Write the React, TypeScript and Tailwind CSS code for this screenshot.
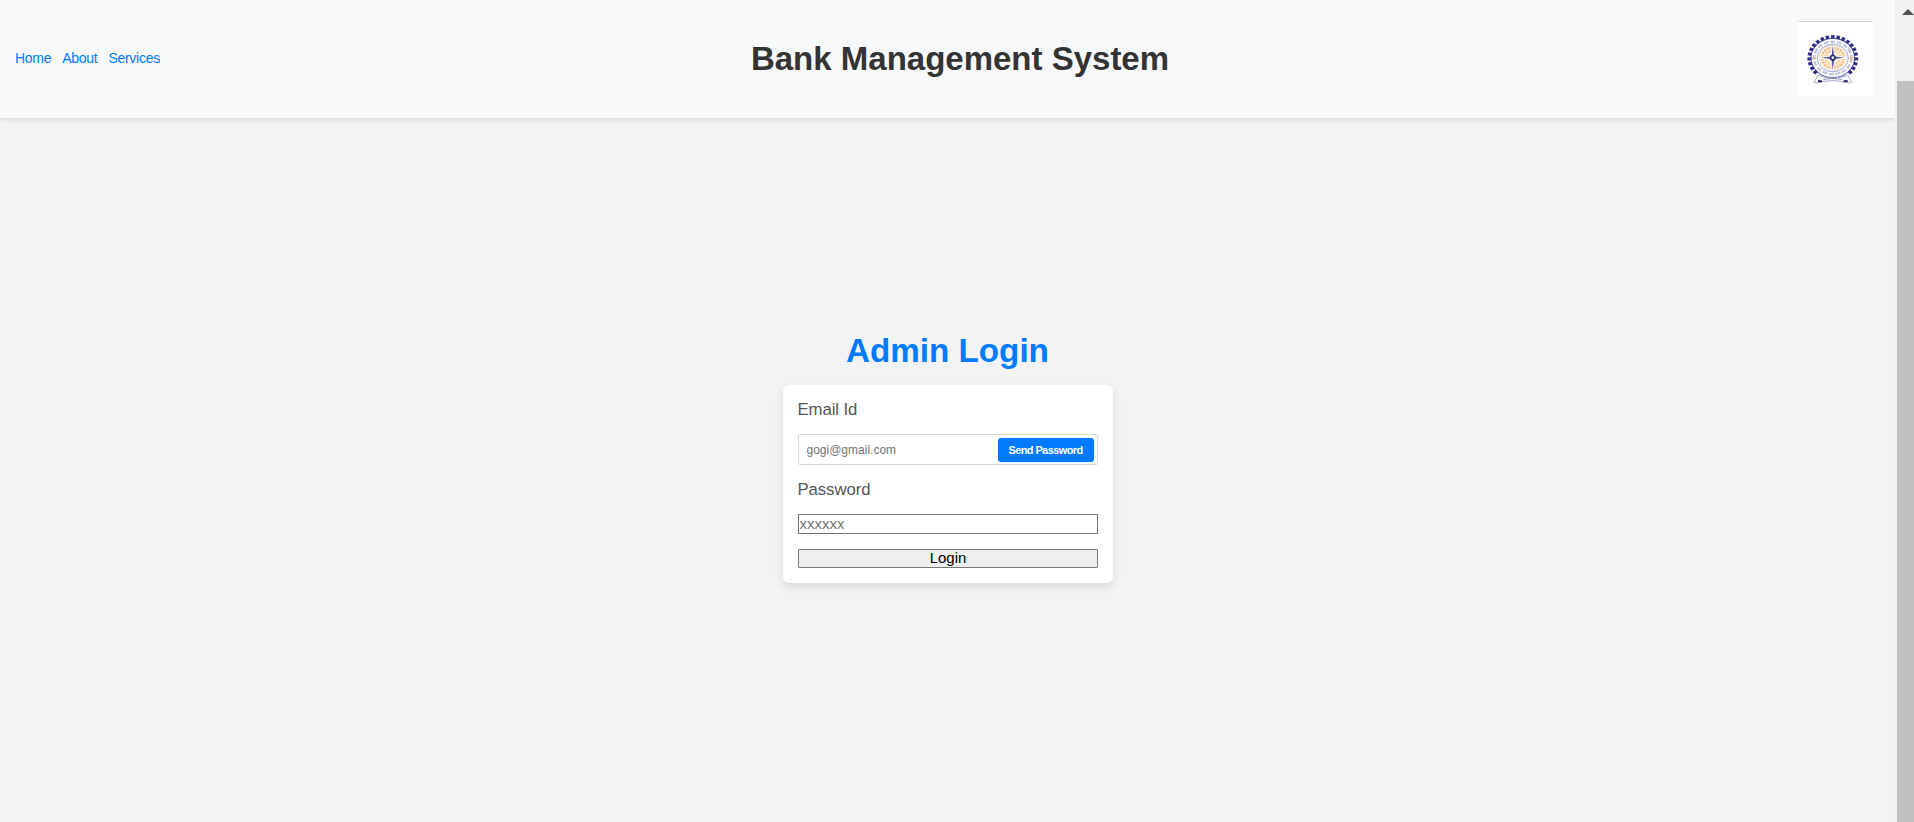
import React from "react";

const toothAngles = Array.from({ length: 21 }, (_, i) => -132 + i * 13.2);

function GearTeeth() {
  return (
    <g fill="#2f2f88">
      {toothAngles.map((angle) => (
        <rect
          key={angle}
          x="-1.75"
          y="-25.4"
          width="3.5"
          height="3.8"
          transform={`translate(34.8 37) scale(1 .9) rotate(${angle})`}
        />
      ))}
    </g>
  );
}

function Emblem() {
  return (
    <svg viewBox="0 0 75 75" className="block h-[75px] w-[75px]" aria-hidden="true">
      <rect width="75" height="75" fill="#fff" />
      <rect width="75" height="1" fill="#d6d6d8" />
      <g fill="none">
        <ellipse cx="34.8" cy="37" rx="21.8" ry="19.6" stroke="#6668a8" strokeWidth="1.1" />
        <ellipse cx="34.8" cy="37" rx="18.6" ry="16.3" stroke="#c3c4de" strokeWidth="2.4" strokeDasharray="5 1.6" />
        <ellipse cx="34.8" cy="37" rx="15.6" ry="13.8" stroke="#8b8dbd" strokeWidth=".8" />
        <ellipse cx="34.8" cy="36.7" rx="13.6" ry="12.4" fill="#fff3e2" stroke="#b5b6d5" strokeWidth=".4" />
        <ellipse cx="34.8" cy="36.7" rx="10.9" ry="10" stroke="#f5bf80" strokeWidth="2.5" strokeDasharray="2.4 .9" />
        <ellipse cx="34.8" cy="36.7" rx="7.6" ry="6.9" stroke="#f8cb96" strokeWidth="2.2" strokeDasharray="2 1" />
        <path d="M14 37.3h4M51.6 37.3h4" stroke="#f0bd85" strokeWidth="2" />
      </g>
      <GearTeeth />
      <path d="M34.8 24.5v24.5M22 36.7h25.6" stroke="#fff" strokeWidth="2.6" />
      <path d="m34.8 24 1.3 11.4 10.5 1.3-10.5 1.3-1.3 11.6-1.3-11.6L23 36.7l10.5-1.3z" fill="#4d4f98" />
      <circle cx="34.8" cy="36.7" r="2.2" fill="#fff" stroke="#25256a" strokeWidth="1.6" />
      <path d="M20 54.5q14.8 5 29.6 0l4 6.7q-3.2 2-6.2-.4-12.6-2.6-25.2 0-3 2.4-6.2.4z" fill="#fff" stroke="#9496c0" strokeWidth=".8" />
      <path d="M25.5 58.4q9.3-1.8 18.6 0" fill="none" stroke="#7779ae" strokeWidth="1.1" strokeDasharray="2.4 .4" />
      <path d="m20.2 58.8 4 .8-.4 2-4-.7zM49.4 58.8l-4 .8.4 2 4-.7z" fill="#2b2b78" />
    </svg>
  );
}

export default function App() {
  return (
    <div className="flex h-[822px] w-full overflow-hidden bg-[#f2f3f5] font-['Liberation_Sans',Arial,sans-serif]">
      <div className="flex min-w-0 flex-1 flex-col">
        <header className="flex h-[118px] shrink-0 items-center justify-between bg-[#f8f9fb] pb-[1px] pl-[15px] pr-[22px] shadow-[0_2px_4px_rgba(0,0,0,0.1)]">
          <nav className="flex w-[185px] gap-[11px] pb-px text-[14px] leading-4 tracking-[-0.28px] text-[#007bff]">
            <a href="#home">Home</a>
            <a href="#about">About</a>
            <a href="#services">Services</a>
          </nav>
          <h1 className="ml-[-3px] whitespace-nowrap text-[33px] font-bold leading-[38px] text-[#333]">Bank Management System</h1>
          <div className="flex w-[150px] justify-end">
            <Emblem />
          </div>
        </header>
        <main className="flex flex-1 flex-col items-center pt-[214px]">
          <h2 className="text-[33.2px] font-bold leading-[38px] text-[#007bff]">Admin Login</h2>
          <form className="mt-[15px] flex h-[198px] w-[330px] flex-col rounded-[6px] bg-white px-[15px] pt-[15px] shadow-[0_4px_8px_rgba(0,0,0,0.1)]" onSubmit={(e) => e.preventDefault()}>
            <label htmlFor="email" className="h-[19px] text-[16.8px] leading-[19px] tracking-[-0.1px] text-[#555]">Email Id</label>
            <div className="mt-[15px] flex h-[31px] items-center rounded-[2px] border border-[#d9d9db] pl-2 pr-[3px]">
              <input id="email" placeholder="gogi@gmail.com" className="min-w-0 flex-1 text-[12px] leading-4 outline-none placeholder:text-[#757575]" />
              <button type="button" className="h-6 w-24 rounded-[3px] bg-[#007bff] pt-px text-[11px] font-bold tracking-[-0.6px] text-white">Send Password</button>
            </div>
            <label htmlFor="password" className="mt-[15px] h-[19px] text-[16.8px] leading-[19px] tracking-[-0.1px] text-[#555]">Password</label>
            <input id="password" placeholder="xxxxxx" className="mt-[15px] h-5 border border-[#767676] px-px pb-[2px] text-[15px] leading-4 outline-none placeholder:text-[#757575]" />
            <button type="submit" className="mt-[15px] h-[19px] rounded-[1px] border border-[#767676] bg-[#efefef] pb-[2px] pl-px text-[15px] leading-[15px] text-black">Login</button>
          </form>
        </main>
      </div>
      <aside className="flex w-[19px] shrink-0 flex-col bg-[#f1f1f1] pl-[2px]">
        <div className="h-[81px] pl-[5px] pt-[9px]">
          <svg viewBox="0 0 12 6" className="h-[6px] w-[12px]" aria-hidden="true">
            <path d="M0 6 6 0l6 6z" fill="#505050" />
          </svg>
        </div>
        <div className="flex-1 bg-[#c1c1c1]" />
      </aside>
    </div>
  );
}
